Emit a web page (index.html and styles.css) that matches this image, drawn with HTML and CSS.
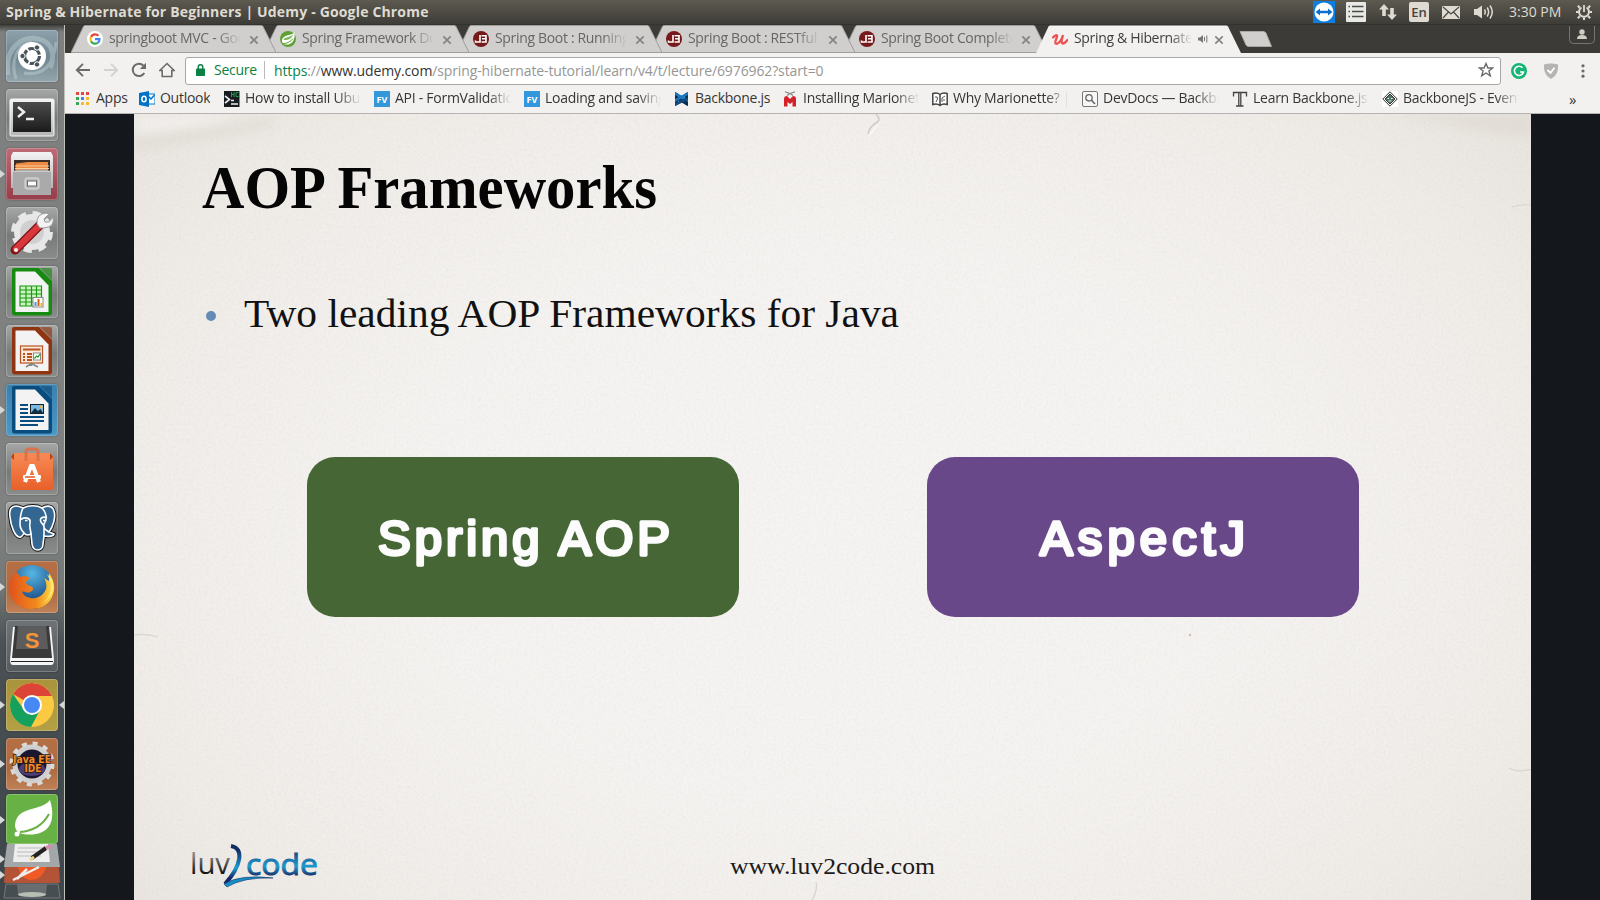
FILE: index.html
```html
<!DOCTYPE html>
<html lang="en">
<head>
<meta charset="utf-8">
<title>Spring &amp; Hibernate for Beginners | Udemy</title>
<link rel="stylesheet" href="styles.css">
</head>
<body>
<svg class="defs" width="0" height="0" aria-hidden="true">
  <defs>
    <linearGradient id="gray" x1="0" y1="0" x2="0" y2="1"><stop offset="0" stop-color="#f4f4f4"/><stop offset="1" stop-color="#b5b5b5"/></linearGradient>
    <linearGradient id="black" x1="0" y1="0" x2="0" y2="1"><stop offset="0" stop-color="#4c4c4c"/><stop offset="1" stop-color="#1b1b1b"/></linearGradient>
    <linearGradient id="orange" x1="0" y1="0" x2="0" y2="1"><stop offset="0" stop-color="#f98a54"/><stop offset="1" stop-color="#e8602a"/></linearGradient>
    <linearGradient id="fox" x1="0" y1="0" x2="1" y2="0"><stop offset="0" stop-color="#e2521c"/><stop offset=".6" stop-color="#f08a1c"/><stop offset="1" stop-color="#ffe04a"/></linearGradient>
    <radialGradient id="globe" cx=".5" cy=".2" r=".8"><stop offset="0" stop-color="#56b6e4"/><stop offset="1" stop-color="#0c2f6c"/></radialGradient>
    <linearGradient id="logo-dark" x1="0" y1="0" x2="0" y2="1"><stop offset="0.3" stop-color="#8a8a8a"/><stop offset=".8" stop-color="#090909"/></linearGradient>
    <linearGradient id="logo-blue" x1="0" y1="0" x2="0" y2="1"><stop offset="0.1" stop-color="#142c66"/><stop offset=".58" stop-color="#1b9bd0"/><stop offset=".85" stop-color="#14265f"/></linearGradient>
    <symbol id="close" viewBox="0 0 10 10"><path d="M1.3 1.3 8.7 8.7M8.7 1.3 1.3 8.7" stroke="#858483" stroke-width="1.7"/></symbol>
    <symbol id="tab-shape" viewBox="0 0 207 28"><path d="M0 27.5 12.5 1.5Q13 .5 14.5 .5H190Q191.5 .5 192 1.5L205 27.5Z" fill="#d1cfcd" stroke="#a09e9b"/></symbol>
    <symbol id="tab-active" viewBox="0 0 207 28"><path d="M0 28 12.5 1.5Q13 .5 14.5 .5H190Q191.5 .5 192 1.5L205 28Z" fill="#f2f1f0"/></symbol>
    <symbol id="spring" viewBox="0 0 16 16"><circle cx="8" cy="8" r="8" fill="#5fa134"/><path d="M14.500 1.500C12 4.500 3 3.500 2 9c-.3 2 1 4.500 3.800 4.600C12 14 15.500 9 14.500 1.500Z" fill="#fff"/><path d="M13 3.500C11.500 6 4.500 5.500 3.500 9 8 9.500 12 7.500 13 3.500Z" fill="#7fb95a"/><path d="M2.800 12.800C7 12.500 11 10.500 13 7.500" stroke="#5fa134" fill="none"/></symbol>
    <symbol id="jb" viewBox="0 0 16 16"><circle cx="8" cy="8" r="8" fill="#76191b"/><path d="M7 4V11H2.500V9.500M8.500 4.800H13V11H8.500M9 7.800H13" stroke="#fff" stroke-width="1.600" fill="none"/></symbol>
    <symbol id="arrow" viewBox="0 0 5 8"><path d="M0 0 5 4 0 8Z" fill="#d6d8d8"/></symbol>
    <symbol id="leafdoc" viewBox="0 0 52 52"><path d="M6 3.500Q6 2 8 2H33L46 15V47Q46 49.500 43 49.500H9Q6 49.500 6 47Z" fill="currentColor"/><path d="M9.500 5.500H29L42.500 19.500V46H9.500Z" fill="#f3f3f3"/><path d="M34 2H44Q46 2 46 4V14Z" fill="currentColor" opacity=".65"/></symbol>
  </defs>
</svg>

<div class="panel">
  <div class="panel-title">Spring &amp; Hibernate for Beginners | Udemy - Google Chrome</div>
  <div class="indicators">
    <svg class="ind-tv" width="22" height="22" viewBox="0 0 22 22"><rect width="22" height="22" fill="#0d7ee0"/><circle cx="11" cy="11" r="9.500" fill="#fff"/><path d="M2.500 11 7 7.500V9.800H15V7.500L19.500 11 15 14.500V12.200H7V14.500Z" fill="#0d6fd0"/></svg>
    <svg class="ind-list" width="20" height="20" viewBox="0 0 20 20"><rect width="20" height="20" rx="1" fill="#e8e8e6"/><path d="M6 4.500H17.500M6 9.500H17.500M6 14.500H17.500M2.500 4.500H4M2.500 9.500H4M2.500 14.500H4" stroke="#4a4a46" stroke-width="1.500"/></svg>
    <svg class="ind-net" width="18" height="18" viewBox="0 0 18 18" fill="#dfdbd2"><path d="M5 1 10 6.500H6.800V13H3.200V6.500H0ZM13 17 8 11.500H11.200V5H14.800V11.500H18Z"/></svg>
    <span class="ind-lang">En</span>
    <svg class="ind-mail" width="18" height="13" viewBox="0 0 18 13"><rect width="18" height="13" rx="1" fill="#dfdbd2"/><path d="M1 1 9 8 17 1M1 12 6.500 6M17 12 11.500 6" stroke="#4a4843" stroke-width="1.200" fill="none"/></svg>
    <svg class="ind-vol" width="20" height="16" viewBox="0 0 20 16"><path d="M0 5H3L8 1.500V14.500L3 11H0Z" fill="#dfdbd2"/><path d="M10.500 5.500Q12 8 10.500 10.500M13.200 3.500Q16 8 13.200 12.500M16 1.500Q20.500 8 16 14.500" stroke="#dfdbd2" stroke-width="1.500" fill="none"/></svg>
    <span class="ind-clock">3:30 PM</span>
    <svg class="ind-gear" width="16" height="16" viewBox="0 0 16 16" fill="none" stroke="#dfdbd2"><path d="M10.500 3.500A5 5 0 1 1 5.500 3.500" stroke-width="2"/><path d="M8 1V8" stroke-width="1.800"/><path d="M3.800 3.800 1.800 1.800M12.200 3.800 14.200 1.800M2.500 8H0M16 8H13.500M3.800 12.200 1.800 14.200M12.200 12.200 14.200 14.200M8 13.500V16" stroke-width="2"/></svg>
  </div>
</div>

<div class="desktop">
  <nav class="launcher">
    <div class="tile tile-ubuntu"><svg viewBox="0 0 52 52"><g fill="none" stroke="#c4d2d7" opacity=".45"><path d="M2 45C-2 20 15 3 36 10 47 14 49 27 44 38" stroke-width="5"/><path d="M10 49C4 30 11 14 26 12M50 12C48 36 37 46 18 43" stroke-width="3"/></g><circle cx="26" cy="26" r="14" fill="#fff"/><circle cx="26" cy="26" r="7.500" fill="none" stroke="#48545a" stroke-width="3.200" stroke-dasharray="14 1.700"/><g fill="#48545a" stroke="#fff"><circle cx="16.500" cy="26" r="2.700"/><circle cx="31" cy="17.500" r="2.700"/><circle cx="31" cy="34.500" r="2.700"/></g></svg></div>
    <div class="tile"><svg viewBox="0 0 52 52"><rect x="4" y="10" width="44" height="37" rx="1.500" fill="url(#gray)" stroke="#f8f8f8"/><rect x="7" y="13" width="38" height="30" fill="url(#black)"/><path d="M12 18 18 23 12 28M20 30H28" stroke="#eee" stroke-width="2.500" fill="none"/></svg></div>
    <div class="tile tile-files"><svg viewBox="0 0 52 52"><path d="M7 4H45L47 8V40H5V8Z" fill="url(#gray)"/><rect x="8" y="12" width="36" height="13" fill="#3d2e29"/><path d="M10 15.500 22 14H42V25H9Z" fill="#ef8a42"/><path d="M9 18H43M9 20.500H43" stroke="#f8d0a0"/><path d="M7 23 14 21.500H39L45 23V47H7Z" fill="#aaa"/><path d="M7 23.500H45" stroke="#ccc"/><rect x="19" y="30" width="14" height="11" rx="2" fill="#bbb" stroke="#ddd"/><rect x="21.500" y="33" width="9" height="5" fill="#fff" stroke="#666"/></svg><svg class="pip" width="5" height="8"><use href="#arrow"/></svg></div>
    <div class="tile"><svg viewBox="0 0 52 52"><circle cx="26" cy="25" r="18" fill="#e7e7e7"/><circle cx="26" cy="25" r="18.500" fill="none" stroke="#e7e7e7" stroke-width="5" stroke-dasharray="8 6.530"/><circle cx="26" cy="25" r="12" fill="#d0d0d0"/><path d="M9 43 34 18" stroke="#7f1416" stroke-width="9" stroke-linecap="round"/><path d="M10 42 32 20" stroke="#d8373b" stroke-width="6.500" stroke-linecap="round"/><circle cx="10" cy="43" r="2" fill="#eee"/><path d="M31 17Q30 7 40 6L43 7 38 12 39 15 43 15 47 10Q49 20 38 21L34 21Z" fill="#f4f4f4" stroke="#999"/></svg></div>
    <div class="tile"><svg viewBox="0 0 52 52" color="#178a10"><use href="#leafdoc"/><path d="M14 20H35.500V40H14ZM14 24H35.500M14 28H35.500M14 32H35.500M14 36H35.500M20 20V40M25.500 20V40M30.500 20V40" stroke="#189a10" stroke-width="1.200" fill="#cdf3c3"/><rect x="27" y="31.500" width="10" height="9.500" fill="#fff" stroke="#888"/><path d="M29.500 40V36" stroke="#4994da" stroke-width="2"/><path d="M32.500 40V33" stroke="#d95c1a" stroke-width="2"/><path d="M35.500 40V37" stroke="#eeb31a" stroke-width="2"/></svg></div>
    <div class="tile"><svg viewBox="0 0 52 52" color="#8f3511"><use href="#leafdoc"/><rect x="14.500" y="21" width="22" height="17" fill="#fbe9dc" stroke="#b9521f" stroke-width="1.200"/><path d="M17 24.500H34.500" stroke="#b9521f" stroke-width="2"/><path d="M17 29H19M21 29H26M17 32H19M21 32H26M17 35H19M21 35H26" stroke="#b9521f" stroke-width="2"/><rect x="27.500" y="28" width="7" height="7" fill="#fff" stroke="#888"/><path d="M28.500 33.500 30.500 31 32 32 34 29" stroke="#24a32c" fill="none" stroke-width="1.300"/><path d="M25.500 38V41M20 42 25.500 38.500 32 42" stroke="#888" fill="none" stroke-width="1.600"/></svg></div>
    <div class="tile tile-writer"><svg viewBox="0 0 52 52" color="#0a4c7d"><use href="#leafdoc"/><path d="M14 21H22M14 25H22M14 29H22M14 33H38M14 37H38M14 41H32" stroke="#0a4c7d" stroke-width="2"/><rect x="24.500" y="20.500" width="13" height="9" fill="#78b9e6" stroke="#123"/><path d="M25 29 29 24 32 27 34.500 25 37 29Z" fill="#173040"/><circle cx="35" cy="23" r="1.500" fill="#f3b53a"/></svg><svg class="pip" width="5" height="8"><use href="#arrow"/></svg></div>
    <div class="tile"><svg viewBox="0 0 52 52"><path d="M5 14 8 10H44L47 14V47H5Z" fill="url(#orange)"/><path d="M5 14 8 10V17ZM47 14 44 10V17Z" fill="#b94216"/><path d="M20 18V9Q20 6 23 6H29Q32 6 32 9V18" fill="none" stroke="#d9734b" stroke-width="3"/><path d="M19 39 25 23H27L33 39" stroke="#fff" stroke-width="4" fill="none"/><rect x="17" y="32" width="18" height="4" rx="1" fill="#fff"/><path d="M19 34H29" stroke="#e05a22" stroke-width="1.500"/></svg></div>
    <div class="tile"><svg viewBox="0 0 52 52"><path d="M17 6C9 2 2 4 4 15 5 25 9 34 13 35 15 36 17 33 18 31 20 34 23 33 25 32L26 42C27 50 37 50 37 42L38 34C43 35 48 34 48 32L43 30C47 25 50 15 48 9 46 2 39 4 36 6 31 3 23 3 17 6Z" fill="#336791" stroke="#161616" stroke-width="3.500"/><path d="M17 6C9 2 2 4 4 15 5 25 9 34 13 35 15 36 17 33 18 31 20 34 23 33 25 32L26 42C27 50 37 50 37 42L38 34C43 35 48 34 48 32L43 30C47 25 50 15 48 9 46 2 39 4 36 6 31 3 23 3 17 6Z" fill="#336791" stroke="#fff" stroke-width="1.600"/><path d="M17 6C14 12 14 16 14 22 14 27 16 29 18 31M14 18C19 14 25 16 24 21 23 25 25 29 25 32M36 6C40 10 42 17 38 22 37 27 40 28 43 30M41 16C37 14 33 16 35 20L38 24V34" fill="none" stroke="#fff" stroke-width="1.600"/><path d="M19 18.500H21.500M37 18.500H39" stroke="#fff" stroke-width="1.500"/></svg></div>
    <div class="tile tile-firefox"><svg viewBox="0 0 52 52"><circle cx="26" cy="26" r="22" fill="url(#globe)"/><path d="M4 22C5 16 8 14 10 10L14 16C17 14 21 15 24 17L21 20C18 22 22 24 24 25 27 25 29 29 24 31 21 33 18 29 16 31 20 39 33 40 39 30 41 27 41 22 38 17L43 20 43 12C54 26 46 44 33 47 16 52 0 39 4 22Z" fill="url(#fox)"/><path d="M41 13C48 25 45 36 36 43 42 39 52 30 45 17Z" fill="#ffe477"/></svg><svg class="pip" width="5" height="8"><use href="#arrow"/></svg></div>
    <div class="tile tile-sublime"><svg viewBox="0 0 52 52"><path d="M7 7 4 40Q4 45 7 45H45Q48 45 48 40L45 7Z" fill="#f5f5f5"/><path d="M5 41.500H47" stroke="#222"/><path d="M9 6H43L46 38H6Z" fill="#3a3a3a"/><path d="M12 6H40L42 29H10Z" fill="#5c5c5c"/><text x="26" y="28" text-anchor="middle" class="tile-s">S</text></svg></div>
    <div class="tile tile-chrome"><svg viewBox="0 0 52 52"><circle cx="26" cy="26" r="22" fill="#fbc942"/><path d="M26 26 7 15A22 22 0 0 1 46 17L26 17Z" fill="#db4437"/><path d="M7 15A22 22 0 0 0 25 48L34 31H18Z" fill="#16a05d"/><circle cx="26" cy="26" r="10" fill="#fff"/><circle cx="26" cy="26" r="8" fill="#4688f4"/></svg><svg class="pip" width="5" height="8"><use href="#arrow"/></svg><svg class="pip pip-right" width="5" height="8"><use href="#arrow"/></svg></div>
    <div class="tile tile-java"><svg viewBox="0 0 52 52"><circle cx="26" cy="26" r="17" fill="#1b1730" stroke="#cfcfcf" stroke-width="5"/><circle cx="26" cy="26" r="20.500" fill="none" stroke="#d9d9d9" stroke-width="4" stroke-dasharray="5 5.730"/><ellipse cx="26" cy="31" rx="13" ry="7" fill="#4b3e77"/><text x="7" y="24.500" class="tile-j" textLength="38" lengthAdjust="spacingAndGlyphs">Java EE</text><text x="18.500" y="34" class="tile-j" textLength="17" lengthAdjust="spacingAndGlyphs">IDE</text></svg><svg class="pip" width="5" height="8"><use href="#arrow"/></svg></div>
    <div class="tile tile-spring"><svg viewBox="0 0 52 52"><path d="M44 6C35 18 11 11 9 31 9 36 12 39 17 40 38 43 52 33 44 6Z" fill="#fff"/><path d="M14 38C27 37 37 31 43 20" fill="none" stroke="#68b245" stroke-width="2"/><circle cx="11" cy="40" r="2.500" fill="#fff"/></svg><svg class="pip" width="5" height="8"><use href="#arrow"/></svg></div>
    <div class="folded"><svg viewBox="0 0 64 57" width="64" height="57"><path d="M7 1H57L60 24H4Z" fill="#a4a7a8"/><path d="M15 1H48L50 19H13Z" fill="#eee"/><path d="M18 5H43M17 9H42M17 13H41" stroke="#bbb"/><path d="M32 15 46 5" stroke="#222" stroke-width="4"/><path d="M46 5 51 3" stroke="#d88bb0" stroke-width="4"/><path d="M30 17 34 14" stroke="#eed28a" stroke-width="3"/><path d="M5 24H59L60 40H4Z" fill="#b45436"/><path d="M18 24H46Q42 37 30 37 20 35 18 24Z" fill="#f15a25"/><path d="M13 37 39 24M17 36 27 26" stroke="#eee" stroke-width="2.500"/><path d="M6 41H58L60 55H4Z" fill="#474e51" stroke="#74797b"/><path d="M17 41H47L46 52Q32 57 18 52Z" fill="#686e6f"/><ellipse cx="32" cy="51.500" rx="14" ry="2.500" fill="#b9beb5"/></svg><svg class="pip" width="5" height="8"><use href="#arrow"/></svg><svg class="pip pip-low" width="5" height="8"><use href="#arrow"/></svg></div>
  </nav>

  <main class="browser">
    <div class="tabs">
      <div class="tab"><svg class="tab-bg"><use href="#tab-shape"/></svg><svg class="fav" viewBox="0 0 16 16"><circle cx="8" cy="8" r="8" fill="#fff"/><g fill="none" stroke-width="2.200"><path d="M11.400 4.800A4.500 4.500 0 0 0 4 6" stroke="#ea4335"/><path d="M4 6A4.500 4.500 0 0 0 4 10.200" stroke="#fbbc05"/><path d="M4 10.200A4.500 4.500 0 0 0 11 11.500" stroke="#34a853"/><path d="M8 8.200H12.500Q12.500 10.500 11 11.500" stroke="#4285f4"/></g></svg><span class="tab-label">springboot MVC - Google</span><svg class="x"><use href="#close"/></svg></div>
      <div class="tab"><svg class="tab-bg"><use href="#tab-shape"/></svg><svg class="fav"><use href="#spring"/></svg><span class="tab-label">Spring Framework Doc</span><svg class="x"><use href="#close"/></svg></div>
      <div class="tab"><svg class="tab-bg"><use href="#tab-shape"/></svg><svg class="fav"><use href="#jb"/></svg><span class="tab-label">Spring Boot : Running</span><svg class="x"><use href="#close"/></svg></div>
      <div class="tab"><svg class="tab-bg"><use href="#tab-shape"/></svg><svg class="fav"><use href="#jb"/></svg><span class="tab-label">Spring Boot : RESTful</span><svg class="x"><use href="#close"/></svg></div>
      <div class="tab"><svg class="tab-bg"><use href="#tab-shape"/></svg><svg class="fav"><use href="#jb"/></svg><span class="tab-label">Spring Boot Complete</span><svg class="x"><use href="#close"/></svg></div>
      <div class="tab tab-on"><svg class="tab-bg"><use href="#tab-active"/></svg><svg class="fav" viewBox="0 0 16 16"><path d="M1 6.500Q4 3.500 5 4.500C6 6 1.500 11.500 4 12.700 7 13.500 10 8 11 4 10 8 8.500 12 11 12.500 13 12.500 14.500 10.500 15.500 9" fill="none" stroke="#ec5252" stroke-width="2.300" stroke-linecap="round"/></svg><span class="tab-label">Spring &amp; Hibernate</span><svg class="snd" viewBox="0 0 10 10"><path d="M0 3.500H2L5 1V9L2 6.500H0Z" fill="#777"/><path d="M6.500 3V7M8.800 1.500V8.500" stroke="#777"/></svg><svg class="x"><use href="#close"/></svg></div>
      <svg class="newtab" width="34" height="16" viewBox="0 0 34 16"><path d="M1 .5H24Q26 .5 27 2L32.500 15.500H10Q8 15.500 7 14Z" fill="#d1cfcd" stroke="#aaa8a4"/></svg>
      <svg class="profile" width="26" height="18" viewBox="0 0 26 18"><path d="M.5 0V13.500Q.5 17.500 4.500 17.500H21.500Q25.500 17.500 25.500 13.500V0" fill="#3c3b37" stroke="#77756f"/><circle cx="13" cy="6" r="2.700" fill="#d0cdc6"/><path d="M8 13Q8 9 13 9T18 13Z" fill="#d0cdc6"/></svg>
    </div>

    <div class="toolbar">
      <svg class="nav" viewBox="0 0 16 16"><path d="M15 8H2M8 1.800 1.800 8 8 14.200" fill="none" stroke="#6c6b6a" stroke-width="1.900"/></svg>
      <svg class="nav" viewBox="0 0 16 16"><path d="M1 8H14M8 1.800 14.200 8 8 14.200" fill="none" stroke="#d3d2d1" stroke-width="1.900"/></svg>
      <svg class="nav" viewBox="0 0 16 16"><path d="M13.300 11A6.200 6.200 0 1 1 12.500 3.600" fill="none" stroke="#6c6b6a" stroke-width="2"/><path d="M15 .8V7H8.800Z" fill="#6c6b6a"/></svg>
      <svg class="nav" viewBox="0 0 16 16"><path d="M.8 8.500 8 1.500 15.200 8.500H12.800V14.500H3.200V8.500Z" fill="none" stroke="#6c6b6a" stroke-width="1.600"/></svg>
      <div class="omnibox">
        <svg class="lock" width="9" height="12" viewBox="0 0 9 12"><path d="M2.200 5V3A2.300 2.300 0 0 1 6.800 3V5" fill="none" stroke="#0b8043" stroke-width="1.400"/><rect y="4.500" width="9" height="7.500" rx=".8" fill="#0b8043"/></svg>
        <span class="secure">Secure</span>
        <span class="url"><b class="scheme">https</b>://<b class="host">www.udemy.com</b>/spring-hibernate-tutorial/learn/v4/t/lecture/6976962?start=0</span>
        <svg class="star" width="16" height="16" viewBox="0 0 16 16"><path d="M8 1.500 9.900 6H14.700L10.900 9 12.300 13.800 8 11 3.700 13.800 5.100 9 1.300 6H6.100Z" fill="none" stroke="#6c6b6a" stroke-width="1.400"/></svg>
      </div>
      <svg class="ext" viewBox="0 0 16 16"><circle cx="8" cy="8" r="8" fill="#15b574"/><path d="M11.500 4.800A4.600 4.600 0 1 0 12.500 9H9M12.500 9 11 11.500" fill="none" stroke="#fff" stroke-width="1.600"/></svg>
      <svg class="ext" viewBox="0 0 16 16"><path d="M1 1.500Q8-.5 15 1.500C15.500 9 13 13 8 16 3 13 .5 9 1 1.500Z" fill="#b4b4b4"/><path d="M4.500 7 7.500 10 11.500 4.800" fill="none" stroke="#fff" stroke-width="1.800"/></svg>
      <svg class="ext dots" viewBox="0 0 16 16" fill="#6c6b6a"><circle cx="8" cy="2.800" r="1.600"/><circle cx="8" cy="8" r="1.600"/><circle cx="8" cy="13.200" r="1.600"/></svg>
    </div>

    <div class="bookmarks">
      <div class="bm bm-apps"><svg viewBox="0 0 16 16"><path d="M1 1H4V4H1ZM6 1H9V4H6ZM11 1H14V4H11Z" fill="#e8453c"/><path d="M1 6H4V9H1Z" fill="#34a853"/><path d="M6 6H9V9H6Z" fill="#4285f4"/><path d="M11 6H14V9H11Z" fill="#f9bb2d"/><path d="M1 11H4V14H1Z" fill="#34a853"/><path d="M6 11H9V14H6ZM11 11H14V14H11Z" fill="#f9bb2d"/></svg><span>Apps</span></div>
      <div class="bm bm-outlook"><svg viewBox="0 0 16 16"><path d="M8 3H16V13H8Z" fill="#fff" stroke="#0072c6"/><path d="M9 5 12 8 15.500 4" fill="none" stroke="#0072c6" stroke-width="1.500"/><path d="M0 2 10 0V16L0 14Z" fill="#0072c6"/><ellipse cx="5" cy="8" rx="2.100" ry="2.800" fill="none" stroke="#fff" stroke-width="1.500"/></svg><span>Outlook</span></div>
      <div class="bm"><svg viewBox="0 0 16 16"><rect width="15.500" height="16" fill="#171c20"/><path d="M1 5 5.500 8.500 1 12M7 13H14M7 9.500H10" stroke="#eee" stroke-width="1.600" fill="none"/><path d="M7.500 1V6M10 1V6M7.500 3.500H10M14.500 1.500H12V5.500H14.500" stroke="#21a048" fill="none"/></svg><span>How to install Ubuntu</span></div>
      <div class="bm"><svg viewBox="0 0 16 16"><rect width="16" height="16" fill="#3297db"/><text x="8" y="12" text-anchor="middle" class="fv">FV</text></svg><span>API - FormValidation</span></div>
      <div class="bm"><svg viewBox="0 0 16 16"><rect width="16" height="16" fill="#3297db"/><text x="8" y="12" text-anchor="middle" class="fv">FV</text></svg><span>Loading and saving</span></div>
      <div class="bm bm-backbone"><svg viewBox="0 0 16 16"><path d="M1 1 4 2.500V13.500L1 15ZM14 1 11 2.500V13.500L14 15Z" fill="#0c2d50"/><path d="M1 4 14 11V15L1 8Z" fill="#0c2d50"/><path d="M1 11 14 4V1L1 8Z" fill="#1b75bc"/><path d="M1 1 14 8V11L1 4Z" fill="#1b75bc"/><path d="M1 15V12L14 6V9Z" fill="#0f4a80"/></svg><span>Backbone.js</span></div>
      <div class="bm"><svg viewBox="0 0 16 16"><path d="M3 .8 8 2.500 13 .8M5 4.500 8 2.500 11 4.500" stroke="#888" stroke-width="1.200" fill="none"/><path d="M2 15.500V8Q2 5 5 5L8 8 11 5Q14 5 14 8V15.500H10.500V11L8 13 5.500 11V15.500Z" fill="#d3222a"/></svg><span>Installing Marionette</span></div>
      <div class="bm"><svg viewBox="0 0 16 16"><path d="M.8 2.500Q5 1 8 3.500 11 1 15.200 2.500V13.500Q11 12 8 14.500 5 12 .8 13.500ZM8 3.500V14.500" fill="#fff" stroke="#444" stroke-width="1.500"/><path d="M3 6Q6 5 5.500 8L4 11M10 11V7L13 5M11 9H13" stroke="#555" fill="none"/></svg><span>Why Marionette? | Marionette</span></div>
      <div class="bm"><svg viewBox="0 0 16 16"><rect x=".5" y=".5" width="15" height="15" rx="1.500" fill="#f8f8f8" stroke="#777"/><circle cx="7" cy="6.800" r="3.200" fill="none" stroke="#666" stroke-width="1.300"/><path d="M9.500 9.300 13 13" stroke="#666" stroke-width="1.600"/></svg><span>DevDocs — Backbone</span></div>
      <div class="bm"><svg viewBox="0 0 16 16"><path d="M1.500 5.500V1.500H14.500V5.500M8.800 1.500V14.500M6.800 1.500V14.500M4 15H11.500" stroke="#444" stroke-width="1.300" fill="none"/></svg><span>Learn Backbone.js</span></div>
      <div class="bm"><svg viewBox="0 0 16 16"><rect width="16" height="16" fill="#fff"/><path d="M8 .8 15.200 8 8 15.200.8 8Z" fill="#fff" stroke="#333"/><path d="M8 3 13 8 8 13 3 8Z" fill="#527965" stroke="#333"/><path d="M5.500 7.500H7M9 7.500H10.500M6.500 10H9.500" stroke="#eee"/></svg><span>BackboneJS - Events</span></div>
      <span class="more">»</span>
    </div>

    <div class="stage">
      <article class="slide">
        <svg class="paper" width="1397" height="786" viewBox="0 0 1397 786">
          <defs>
            <filter id="grain" x="0" y="0" width="100%" height="100%"><feTurbulence type="fractalNoise" baseFrequency=".4" numOctaves="3" seed="4"/><feColorMatrix values="0 0 0 0 .5  0 0 0 0 .45  0 0 0 0 .4  .22 0 0 0 -.085"/></filter>
            <filter id="soft" x="-20%" y="-100%" width="140%" height="300%"><feGaussianBlur stdDeviation="6"/></filter>
          </defs>
          <rect width="1397" height="786" filter="url(#grain)"/>
          <path d="M0 20Q70 14 110 0H0Z" fill="#fff" opacity=".4" filter="url(#soft)"/>
          <path d="M0 30Q70 22 140 8" stroke="#c8c2b8" stroke-width="8" fill="none" opacity=".3" filter="url(#soft)"/>
          <path d="M1260 0Q1330 16 1397 24V0Z" fill="#d8d2ca" opacity=".4" filter="url(#soft)"/>
          <path d="M734 20Q736 12 742 9T742 0" stroke="#cfcac3" stroke-width="1.500" fill="none"/>
          <path d="M735 22Q739 15 744 11" stroke="#fff" fill="none"/>
          <path d="M0 521Q12 519 24 523M1375 654Q1384 659 1397 655M1378 93Q1388 90 1397 91M678 786Q684 776 682 768" stroke="#d9d4cd" stroke-width="1.200" fill="none"/>
          <circle cx="1056" cy="521" r="1.200" fill="#c9bfb6"/>
        </svg>
        <h1><svg width="470" height="70"><text x="1" y="54" textLength="455" lengthAdjust="spacingAndGlyphs">AOP Frameworks</text></svg></h1>
        <div class="point"><i></i><svg width="670" height="56"><text x="0" y="40.500" textLength="655" lengthAdjust="spacingAndGlyphs">Two leading AOP Frameworks for Java</text></svg></div>
        <div class="cards">
          <div class="card card-green"><svg width="432" height="160"><text x="71" y="98" textLength="292">Spring AOP</text></svg></div>
          <div class="card card-purple"><svg width="432" height="160"><text x="113" y="98" textLength="205">AspectJ</text></svg></div>
        </div>
        <footer>
          <svg class="logo" width="130" height="46" viewBox="0 0 130 46"><text x="0" y="31" class="luv" textLength="40" lengthAdjust="spacingAndGlyphs">luv</text><path d="M41 3C54 5 52 22 35 41" fill="none" stroke="url(#logo-blue)" stroke-width="4"/><path d="M34 41Q50 31 83 35 53 34 37 44Z" fill="#168fc6" stroke="#12306a" stroke-width=".6"/><text x="56" y="31.500" class="code" textLength="72" lengthAdjust="spacingAndGlyphs">code</text></svg>
          <svg class="site" width="210" height="36"><text x="1" y="26" textLength="205" lengthAdjust="spacingAndGlyphs">www.luv2code.com</text></svg>
        </footer>
      </article>
    </div>
  </main>
</div>
</body>
</html>
```
FILE: styles.css
```css
* { box-sizing: border-box; }
body { margin: 0; width: 1600px; height: 900px; overflow: hidden; font-family: "Open Sans", "Noto Sans", sans-serif; font-size: 14px; background: #14181d; }
svg { display: block; flex: none; }
.defs { position: absolute; }

/* top panel */
.panel { height: 25px; display: flex; align-items: center; justify-content: space-between; background: linear-gradient(#5d5a50, #3d3c37); border-bottom: 1px solid #33322e; color: #dfdbd2; }
.panel-title { padding-left: 6px; margin-top: -1px; font-weight: 700; font-size: 14px; letter-spacing: .17px; white-space: nowrap; }
.indicators { display: flex; align-items: center; padding-right: 8px; }
.ind-tv { margin-left: -1px; }
.ind-list { margin-left: 11px; }
.ind-net { margin-left: 13px; }
.ind-lang { margin-left: 12px; width: 20px; height: 20px; border-radius: 2px; background: #dfdbd2; color: #45433e; font-size: 13px; line-height: 20px; text-align: center; font-weight: 600; }
.ind-mail { margin-left: 13px; }
.ind-vol { margin-left: 14px; }
.ind-clock { width: 53px; margin-left: 15px; margin-top: -1px; white-space: nowrap; }
.ind-gear { margin-left: 14px; }

.desktop { display: flex; height: 875px; }

/* launcher */
.launcher { width: 65px; padding: 5px 0 0 6px; border-right: 1px solid #bfc0b8; background: linear-gradient(#3f413f, #7d807e 7px, #7f8280 480px, #747977 560px, #4a5053 620px, #3e464b); display: flex; flex-direction: column; align-items: flex-start; gap: 7px; }
.tile { position: relative; flex: none; width: 52px; height: 52px; border-radius: 4px; background: linear-gradient(#a6a8a7, #777a79 55%, #8b8d8c); box-shadow: inset 0 0 0 1px rgba(255,255,255,.22), 0 0 2px rgba(0,0,0,.35); }
.tile > svg:first-child { width: 52px; height: 52px; }
.tile-ubuntu { background: linear-gradient(#8da2ac, #6f858f 50%, #94a6ac); }
.tile-files { background: linear-gradient(#bd6b75, #963e49); }
.tile-writer { background: linear-gradient(#3b80ad, #4c98c5); }
.tile-firefox, .tile-java { background: linear-gradient(#b56f45, #ad6b42 60%, #bf8157); }
.tile-sublime { background: linear-gradient(#6e7375, #565c5e); }
.tile-chrome { background: linear-gradient(#a9943d, #b3a044); }
.tile-spring { height: 50px; margin-top: -3px; background: #68b245; }
.tile > svg.pip, .pip { position: absolute; left: -6px; top: 22px; }
.tile > svg.pip-right { left: 53px; transform: scaleX(-1); }
.tile-s { font: 700 22px "Liberation Sans", sans-serif; fill: #f3943a; }
.tile-j { font: 700 10px "DejaVu Sans", sans-serif; fill: #f18c2e; stroke: #2b1405; stroke-width: 1.6px; paint-order: stroke; }
.folded { position: relative; margin: -8px 0 0 -6px; width: 64px; flex: none; }
.folded .pip { left: 0; top: 12px; }
.folded .pip-low { top: 28px; }

/* tabs */
.browser { width: 1535px; display: flex; flex-direction: column; }
.tabs { height: 28px; background: #3c3b37; display: flex; padding-left: 6px; flex: none; }
.tab { position: relative; width: 193px; height: 28px; display: flex; align-items: center; padding-left: 16px; color: #676664; }
.tab:nth-child(1) { z-index: 5; } .tab:nth-child(2) { z-index: 4; } .tab:nth-child(3) { z-index: 3; } .tab:nth-child(4) { z-index: 2; } .tab:nth-child(5) { z-index: 1; }
.tab-on { z-index: 6; color: #3f3e3d; }
.tab-bg { position: absolute; left: 0; top: 0; width: 207px; height: 28px; }
.tab > :not(.tab-bg) { position: relative; }
.fav { width: 16px; height: 16px; margin-top: -1px; }
.tab-label { width: 132px; margin-left: 6px; margin-top: -2px; overflow: hidden; white-space: nowrap; line-height: 20px; letter-spacing: -.33px; -webkit-mask-image: linear-gradient(90deg, #000 82%, transparent 100%); mask-image: linear-gradient(90deg, #000 82%, transparent 100%); }
.tab-on .tab-label { width: 118px; }
.snd { width: 10px; height: 10px; margin-left: 6px; margin-right: -2px; }
.x { width: 10px; height: 10px; margin-left: 8px; margin-top: 1px; }
.newtab { margin: 6px 0 0 10px; }
.profile { margin: 1px 5px 0 auto; }

/* toolbar */
.toolbar { height: 33px; flex: none; background: #f2f1f0; display: flex; align-items: center; padding: 2px 10px 0; }
.nav { width: 16px; height: 16px; margin-right: 12px; margin-top: -1px; }
.omnibox { width: 1316px; height: 28px; flex: none; margin-left: -2px; background: #fff; border: 1px solid #a8a7a5; border-radius: 3px; display: flex; align-items: center; padding-left: 10px; margin-right: 10px; padding-bottom: 1px; }
.secure { color: #0b8043; width: 51px; margin-left: 9px; border-right: 1px solid #bbb; line-height: 18px; letter-spacing: -.25px; }
.url { margin-left: 9px; color: #969695; white-space: nowrap; letter-spacing: -.12px; }
.url b { font-weight: 400; }
.scheme { color: #0b8043; }
.host { color: #333; }
.star { margin-left: auto; margin-right: 6px; }
.ext { width: 16px; height: 16px; margin-right: 16px; flex: none; }

/* bookmarks */
.bookmarks { height: 28px; flex: none; background: #f2f1f0; border-bottom: 1px solid #b5b4b2; display: flex; align-items: center; padding: 0 0 2px 10px; color: #373635; }
.bm { width: 150px; display: flex; align-items: center; gap: 5px; flex: none; }
.bm svg { width: 16px; height: 16px; }
.bm span { width: 116px; overflow: hidden; white-space: nowrap; line-height: 20px; margin-top: -1px; letter-spacing: -.27px; -webkit-mask-image: linear-gradient(90deg, #000 80%, transparent 100%); mask-image: linear-gradient(90deg, #000 80%, transparent 100%); }
.bm-apps { width: 64px; }
.bm-outlook { width: 85px; }
.bm-backbone { width: 108px; }
.bm-apps span, .bm-outlook span, .bm-backbone span { width: auto; -webkit-mask-image: none; mask-image: none; }
.more { margin-left: 37px; font-size: 15px; }
.fv { font: 700 9px "Open Sans", sans-serif; fill: #fff; }

/* slide */
.stage { flex: 1; background: #14181d; padding-left: 69px; }
.slide { position: relative; width: 1397px; height: 786px; background: radial-gradient(ellipse 950px 620px at 50% 52%, #f6f4f3 0, #f5f3f1 45%, #efece8 80%, #e7e3dd 100%); }
.paper { position: absolute; inset: 0; }
.slide > :not(.paper) { position: relative; }
h1 { margin: 0; padding: 40px 0 0 67px; }
h1 text { font: 700 62px "Liberation Serif", serif; fill: #060505; }
.point { display: flex; align-items: center; margin: 62px 0 0 71px; }
.point i { width: 10px; height: 10px; border-radius: 50%; background: #668bb7; margin: 4px 29px 0 1px; }
.point svg { margin-left: -1px; }
.point text { font: 400 39.5px "Liberation Serif", serif; fill: #111; }
.cards { display: flex; gap: 188px; margin: 115px 0 0 172.500px; }
.card { width: 432px; height: 160px; border-radius: 28px; }
.card-green { background: #466635; }
.card-purple { background: #69488a; }
.card text { font: 400 49px "Liberation Sans", sans-serif; fill: #fcfcfc; stroke: #fcfcfc; stroke-width: 3.4px; stroke-linejoin: round; stroke-linecap: round; }
footer { display: flex; align-items: center; margin-top: 226px; padding-left: 56px; }
.site { margin-left: 409px; }
.site text { font: 400 24px "Liberation Serif", serif; fill: #1d1b1a; }
.luv { font: 400 30px "Open Sans", sans-serif; fill: url(#logo-dark); }
.code { font: 400 29px "Open Sans", sans-serif; fill: url(#logo-blue); stroke: url(#logo-blue); stroke-width: .9px; }
```
